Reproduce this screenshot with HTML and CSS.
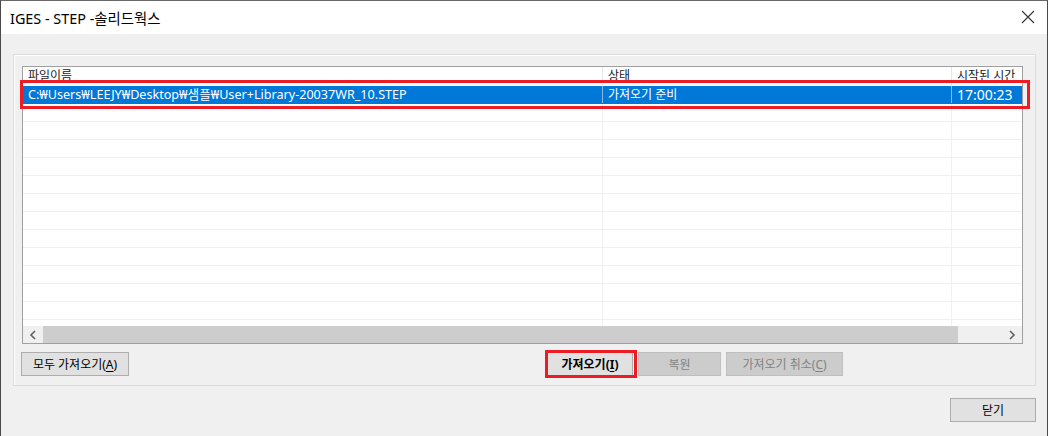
FILE: index.html
```html
<!DOCTYPE html>
<html lang="ko">
<head>
    <meta charset="UTF-8">
    <title>IGES - STEP -솔리드웍스</title>
    <link rel="stylesheet" href="styles.css">
</head>
<body>
    <div class="window">
        <!-- Title bar -->
        <div class="titlebar">
            <span class="title">IGES - STEP -솔리드웍스</span>
            <svg class="close-icon" width="14" height="14" viewBox="0 0 14 14">
                <path d="M1 1 L13 13 M13 1 L1 13" stroke="#333" stroke-width="1.1" fill="none"/>
            </svg>
        </div>

        <div class="client">
            <div class="group">
                <!-- File list -->
                <div class="listview">
                    <div class="list-header">
                        <div class="cell col-name">파일이름</div>
                        <div class="cell col-state">상태</div>
                        <div class="cell col-time">시작된 시간</div>
                    </div>
                    <div class="list-body">
                        <div class="row selected">
                            <div class="cell col-name path">C:₩Users₩LEEJY₩Desktop₩샘플₩User+Library-20037WR_10.STEP</div>
                            <div class="cell col-state">가져오기 준비</div>
                            <div class="cell col-time time">17:00:23</div>
                        </div>
                        <div class="row"><div class="cell col-name"></div><div class="cell col-state"></div><div class="cell col-time"></div></div>
                        <div class="row"><div class="cell col-name"></div><div class="cell col-state"></div><div class="cell col-time"></div></div>
                        <div class="row"><div class="cell col-name"></div><div class="cell col-state"></div><div class="cell col-time"></div></div>
                        <div class="row"><div class="cell col-name"></div><div class="cell col-state"></div><div class="cell col-time"></div></div>
                        <div class="row"><div class="cell col-name"></div><div class="cell col-state"></div><div class="cell col-time"></div></div>
                        <div class="row"><div class="cell col-name"></div><div class="cell col-state"></div><div class="cell col-time"></div></div>
                        <div class="row"><div class="cell col-name"></div><div class="cell col-state"></div><div class="cell col-time"></div></div>
                        <div class="row"><div class="cell col-name"></div><div class="cell col-state"></div><div class="cell col-time"></div></div>
                        <div class="row"><div class="cell col-name"></div><div class="cell col-state"></div><div class="cell col-time"></div></div>
                        <div class="row"><div class="cell col-name"></div><div class="cell col-state"></div><div class="cell col-time"></div></div>
                        <div class="row"><div class="cell col-name"></div><div class="cell col-state"></div><div class="cell col-time"></div></div>
                        <div class="row"><div class="cell col-name"></div><div class="cell col-state"></div><div class="cell col-time"></div></div>
                        <div class="row"><div class="cell col-name"></div><div class="cell col-state"></div><div class="cell col-time"></div></div>
                    </div>
                    <div class="hscroll">
                        <div class="arrow">
                            <svg width="8" height="10" viewBox="0 0 8 10"><path d="M6 1 L2 5 L6 9" stroke="#606060" stroke-width="1.6" fill="none"/></svg>
                        </div>
                        <div class="thumb"></div>
                        <div class="track"></div>
                        <div class="arrow">
                            <svg width="8" height="10" viewBox="0 0 8 10"><path d="M2 1 L6 5 L2 9" stroke="#606060" stroke-width="1.6" fill="none"/></svg>
                        </div>
                    </div>
                </div>

                <!-- Buttons inside group -->
                <div class="group-buttons">
                    <button class="btn btn-all">모두 가져오기(<u>A</u>)</button>
                    <div class="center-buttons">
                        <button class="btn btn-import">가져오기(<u>I</u>)</button>
                        <button class="btn btn-restore" disabled>복원</button>
                        <button class="btn btn-cancel" disabled>가져오기 취소(<u>C</u>)</button>
                    </div>
                </div>
            </div>

            <div class="footer">
                <button class="btn btn-close">닫기</button>
            </div>
        </div>

        <!-- Red annotation boxes -->
        <div class="mark mark-row"></div>
        <div class="mark mark-btn"></div>
    </div>
</body>
</html>
```

FILE: styles.css
```css
* {
    box-sizing: border-box;
    margin: 0;
    padding: 0;
}

body {
    font-family: "Noto Sans", "Noto Sans CJK KR", sans-serif;
    background: #f0f0f0;
    width: 1048px;
    height: 436px;
    overflow: hidden;
}

.window {
    position: relative;
    width: 1048px;
    height: 436px;
    display: flex;
    flex-direction: column;
    border-left: 1px solid #4a4a4a;
    border-right: 1px solid #4a4a4a;
    border-top: 1px solid #6a6a6a;
    background: #f0f0f0;
}

/* Title bar */
.titlebar {
    height: 33px;
    background: #fff;
    display: flex;
    align-items: center;
    justify-content: space-between;
    padding: 0 12px 0 9px;
}

.title {
    font-size: 14.4px;
    color: #000;
}

.close-icon {
    display: block;
    margin-top: -1px;
}

/* Client area */
.client {
    flex: 1;
    padding: 20px 11px 0 12px;
    display: flex;
    flex-direction: column;
}

.group {
    height: 332px;
    border: 1px solid #dcdcdc;
    box-shadow: inset 1px 1px 0 #fff;
    padding: 11px 12px 0 7px;
    display: flex;
    flex-direction: column;
}

/* List view */
.listview {
    margin-left: 1px;
    height: 278px;
    border: 1px solid #a0a0a0;
    background: #fff;
    display: flex;
    flex-direction: column;
    overflow: hidden;
    font-size: 12px;
}

.list-header {
    height: 19px;
    display: flex;
    flex-shrink: 0;
}

.list-header .cell {
    color: #1a1a1a;
    border-right: 1px solid #e5e5e5;
    padding-left: 5px;
    line-height: 18px;
}

.cell {
    flex-shrink: 0;
    white-space: nowrap;
    overflow: hidden;
}

.col-name { width: 580px; }
.col-state { width: 349px; padding-left: 5px; }
.col-time { width: 120px; padding-left: 5px; }

.list-body {
    flex: 1;
    overflow: hidden;
}

.row {
    height: 18px;
    display: flex;
    border-bottom: 1px solid #f0f0f0;
}

.row .cell {
    border-right: 1px solid #f0f0f0;
    padding-left: 5px;
    line-height: 17px;
}

.row.selected {
    background: #0078d7;
    color: #fff;
    border-bottom-color: #0078d7;
}

.row.selected .cell {
    border-right-color: #8ab9e6;
}

.path {
    font-size: 12.6px;
}

.time {
    font-size: 14px;
}

/* Horizontal scrollbar */
.hscroll {
    height: 17px;
    flex-shrink: 0;
    display: flex;
    background: #f0f0f0;
}

.hscroll .arrow {
    width: 20px;
    display: flex;
    align-items: center;
    justify-content: center;
}

.hscroll .thumb {
    width: 915px;
    background: #cdcdcd;
}

.hscroll .track {
    flex: 1;
}

/* Buttons */
.group-buttons {
    display: flex;
    margin-top: 8px;
}

.center-buttons {
    display: flex;
    margin-left: 419px;
    gap: 5px;
}

.btn {
    height: 24px;
    font-family: "Noto Sans", "Noto Sans CJK KR", sans-serif;
    font-size: 12px;
    color: #000;
    background: #e1e1e1;
    border: 1px solid #adadad;
}

.btn u {
    text-underline-offset: 2px;
}

.btn-all { width: 108px; }
.btn-import { width: 86px; font-weight: bold; margin-left: -1px; }
.btn-restore { width: 83px; }
.btn-cancel { width: 117px; }

.btn:disabled {
    background: #cccccc;
    border-color: #bfbfbf;
    color: #838383;
}

.footer {
    display: flex;
    justify-content: flex-end;
    margin-top: 12px;
}

.btn-close {
    width: 86px;
}

/* Annotation boxes */
.mark {
    position: absolute;
    border: 3px solid #ec1c24;
}

.mark-row {
    left: 19px;
    top: 79px;
    width: 1010px;
    height: 29px;
}

.mark-btn {
    left: 544px;
    top: 349px;
    width: 92px;
    height: 28px;
}
```
